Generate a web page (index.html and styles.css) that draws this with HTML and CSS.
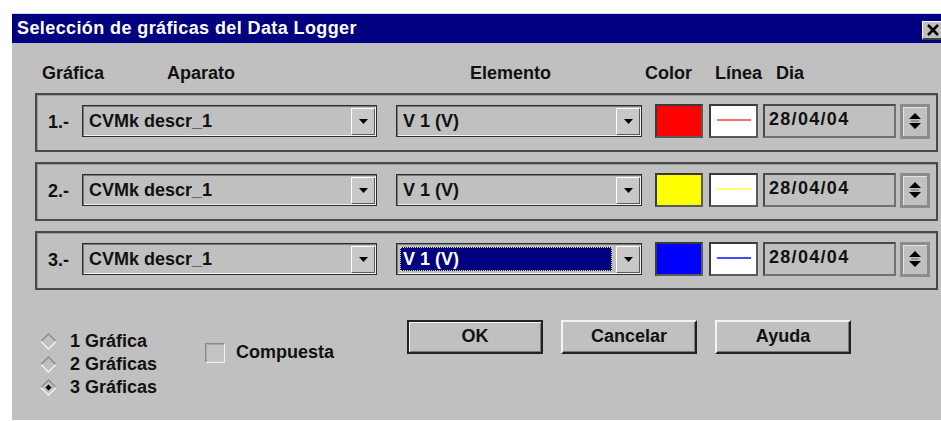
FILE: index.html
```html
<!DOCTYPE html>
<html lang="es">
<head>
<meta charset="utf-8">
<title>Selección de gráficas del Data Logger</title>
<link rel="stylesheet" href="styles.css">
</head>
<body>
<div class="dialog">
  <div class="titlebar">
    <span class="title">Selección de gráficas del Data Logger</span>
    <span class="close">
      <svg width="14" height="12" viewBox="0 0 14 12"><path d="M2 1 L12 11 M12 1 L2 11" stroke="#000" stroke-width="2.6" fill="none"/></svg>
    </span>
  </div>
  <div class="client">
    <div class="heads">
      <span class="h-graf">Gráfica</span>
      <span class="h-apar">Aparato</span>
      <span class="h-elem">Elemento</span>
      <span class="h-color">Color</span>
      <span class="h-linea">Línea</span>
      <span>Dia</span>
    </div>

    <div class="series">
      <div class="row">
        <span class="num">1.-</span>
        <div class="combo aparato">
          <span class="field">CVMk descr_1</span>
          <span class="drop"><svg width="9" height="5" viewBox="0 0 9 5"><path d="M0 0 H9 L4.5 5 Z" fill="#000"/></svg></span>
        </div>
        <div class="combo elemento">
          <span class="field">V 1 (V)</span>
          <span class="drop"><svg width="9" height="5" viewBox="0 0 9 5"><path d="M0 0 H9 L4.5 5 Z" fill="#000"/></svg></span>
        </div>
        <span class="swatch red"></span>
        <span class="linebox"><span class="stroke red"></span></span>
        <span class="date">28/04/04</span>
        <span class="spin"><svg width="16" height="22" viewBox="0 0 16 22"><path d="M2 9 L8 3 L14 9 Z M2 13 L8 19 L14 13 Z" fill="#000"/><path d="M4 11 H12" stroke="#6a6a6a" stroke-width="1"/></svg></span>
      </div>

      <div class="row">
        <span class="num">2.-</span>
        <div class="combo aparato">
          <span class="field">CVMk descr_1</span>
          <span class="drop"><svg width="9" height="5" viewBox="0 0 9 5"><path d="M0 0 H9 L4.5 5 Z" fill="#000"/></svg></span>
        </div>
        <div class="combo elemento">
          <span class="field">V 1 (V)</span>
          <span class="drop"><svg width="9" height="5" viewBox="0 0 9 5"><path d="M0 0 H9 L4.5 5 Z" fill="#000"/></svg></span>
        </div>
        <span class="swatch yellow"></span>
        <span class="linebox"><span class="stroke yellow"></span></span>
        <span class="date">28/04/04</span>
        <span class="spin"><svg width="16" height="22" viewBox="0 0 16 22"><path d="M2 9 L8 3 L14 9 Z M2 13 L8 19 L14 13 Z" fill="#000"/><path d="M4 11 H12" stroke="#6a6a6a" stroke-width="1"/></svg></span>
      </div>

      <div class="row">
        <span class="num">3.-</span>
        <div class="combo aparato">
          <span class="field">CVMk descr_1</span>
          <span class="drop"><svg width="9" height="5" viewBox="0 0 9 5"><path d="M0 0 H9 L4.5 5 Z" fill="#000"/></svg></span>
        </div>
        <div class="combo elemento">
          <span class="field selected">V 1 (V)</span>
          <span class="drop"><svg width="9" height="5" viewBox="0 0 9 5"><path d="M0 0 H9 L4.5 5 Z" fill="#000"/></svg></span>
        </div>
        <span class="swatch blue"></span>
        <span class="linebox"><span class="stroke blue"></span></span>
        <span class="date">28/04/04</span>
        <span class="spin"><svg width="16" height="22" viewBox="0 0 16 22"><path d="M2 9 L8 3 L14 9 Z M2 13 L8 19 L14 13 Z" fill="#000"/><path d="M4 11 H12" stroke="#6a6a6a" stroke-width="1"/></svg></span>
      </div>
    </div>

    <div class="footer">
      <div class="radios">
        <label class="radio">
          <svg width="17" height="17" viewBox="0 0 17 17"><path d="M1 8.5 L8.5 1 L16 8.5" stroke="#8c8c8c" stroke-width="1.4" fill="none"/><path d="M1 8.5 L8.5 16 L16 8.5" stroke="#f2f2f2" stroke-width="1.4" fill="none"/></svg>
          <span>1 Gráfica</span>
        </label>
        <label class="radio">
          <svg width="17" height="17" viewBox="0 0 17 17"><path d="M1 8.5 L8.5 1 L16 8.5" stroke="#8c8c8c" stroke-width="1.4" fill="none"/><path d="M1 8.5 L8.5 16 L16 8.5" stroke="#f2f2f2" stroke-width="1.4" fill="none"/></svg>
          <span>2 Gráficas</span>
        </label>
        <label class="radio">
          <svg width="17" height="17" viewBox="0 0 17 17"><path d="M1 8.5 L8.5 1 L16 8.5" stroke="#8c8c8c" stroke-width="1.4" fill="none"/><path d="M1 8.5 L8.5 16 L16 8.5" stroke="#f2f2f2" stroke-width="1.4" fill="none"/><path d="M8.5 5.5 L11.5 8.5 L8.5 11.5 L5.5 8.5 Z" fill="#000"/></svg>
          <span>3 Gráficas</span>
        </label>
      </div>
      <label class="check">
        <span class="box"></span>
        <span>Compuesta</span>
      </label>
      <div class="buttons">
        <span class="btn default">OK</span>
        <span class="btn">Cancelar</span>
        <span class="btn">Ayuda</span>
      </div>
    </div>
  </div>
</div>
</body>
</html>
```

FILE: styles.css
```css
html, body {
  margin: 0;
  padding: 0;
  background: #fff;
  overflow: hidden;
}

body {
  font-family: "Liberation Sans", Arial, sans-serif;
  font-weight: bold;
  font-size: 18px;
  color: #111;
}

.dialog {
  margin: 13px 0 0 12px;
  width: 929px;
  height: 407px;
  background: #c0c0c0;
  overflow: hidden;
}

/* caption bar */
.titlebar {
  height: 30px;
  background: #000080;
  display: flex;
  align-items: center;
  border-top: 1px solid #d8d8e8;
  box-sizing: border-box;
}

.title {
  color: #fff;
  padding-left: 5px;
  letter-spacing: 0.4px;
}

.close {
  margin-left: auto;
  margin-right: -6px;
  width: 25px;
  height: 19px;
  margin-top: 3px;
  background: #c0c0c0;
  border-top: 1px solid #fff;
  border-left: 1px solid #fff;
  border-bottom: 2px solid #404040;
  display: flex;
  align-items: center;
  padding-left: 3px;
  box-sizing: border-box;
}

/* dialog body */
.client {
  padding: 20px 3px 0 23px;
}

.heads {
  display: flex;
  padding-left: 7px;
  line-height: 20px;
  height: 20px;
}

.h-graf { width: 125px; }
.h-apar { width: 303px; }
.h-elem { width: 175px; }
.h-color { width: 70px; }
.h-linea { width: 61px; }

.series {
  margin-top: 10px;
  display: flex;
  flex-direction: column;
  gap: 10px;
}

.row {
  height: 59px;
  box-sizing: border-box;
  border: 2px solid #4a4a4a;
  box-shadow: inset 1px 1px 0 #9a9a9a;
  display: flex;
  align-items: center;
  padding: 0 0 3px 11px;
}

.num {
  width: 34px;
  padding-top: 3px;
}

.combo {
  height: 32px;
  box-sizing: border-box;
  border: 1px solid #2e2e2e;
  box-shadow: inset 1px 1px 0 #7a7a7a, inset -1px -1px 0 #f2f2f2;
  display: flex;
  align-items: stretch;
  padding: 2px 2px 2px 3px;
}

.combo.aparato { width: 295px; margin-right: 19px; }
.combo.elemento { width: 246px; margin-right: 13px; }

.field {
  flex: 1;
  display: flex;
  align-items: center;
  padding-left: 3px;
}

.field.selected {
  background: #000080;
  color: #fff;
  outline: 1px dotted #e8e070;
  outline-offset: -1px;
  margin: 1px 4px 1px 0;
}

.drop {
  width: 22px;
  background: #c8c8c8;
  border-top: 1px solid #fff;
  border-left: 1px solid #fff;
  box-shadow: 1px 1px 0 #5a5a5a;
  display: flex;
  align-items: center;
  justify-content: center;
}

.swatch, .linebox, .date {
  height: 34px;
  box-sizing: border-box;
  border: 2px solid;
  border-color: #3a3a3a #5a5a5a #5a5a5a #3a3a3a;
}

.swatch { width: 48px; margin-right: 6px; }
.swatch.red { background: #ff0000; }
.swatch.yellow { background: #ffff00; }
.swatch.blue { background: #0000ff; }

.linebox {
  width: 49px;
  margin-right: 5px;
  background: #fff;
  display: flex;
  align-items: center;
  justify-content: center;
  padding-bottom: 2px;
}

.stroke {
  width: 34px;
  height: 2px;
}
.stroke.red { background: #ff7070; }
.stroke.yellow { background: #ffff70; }
.stroke.blue { background: #4a4aff; }

.date {
  width: 133px;
  margin-right: 4px;
  padding: 3px 0 0 4px;
  letter-spacing: 1.3px;
  line-height: 20px;
  border-color: #4a4a4a #707070 #707070 #4a4a4a;
}

.spin {
  width: 30px;
  height: 35px;
  box-sizing: border-box;
  border: 3px solid #8c8c8c;
  background: #c0c0c0;
  box-shadow: inset 1px 1px 0 #e4e4e4;
  display: flex;
  align-items: center;
  justify-content: center;
}

/* bottom controls */
.footer {
  display: flex;
  align-items: flex-start;
  margin-top: 30px;
}

.radios {
  width: 165px;
  margin: 10px 0 0 5px;
  display: flex;
  flex-direction: column;
}

.radio {
  display: flex;
  align-items: center;
  gap: 13px;
  height: 23px;
}

.check {
  width: 202px;
  margin-top: 22px;
  display: flex;
  align-items: center;
  gap: 11px;
}

.box {
  width: 20px;
  height: 20px;
  box-sizing: border-box;
  border: 1px solid;
  border-color: #8a8a8a #f0f0f0 #f0f0f0 #8a8a8a;
  box-shadow: inset 1px 1px 0 #a8a8a8;
  background: #c4c4c4;
}

.buttons {
  display: flex;
  gap: 18px;
}

.btn {
  width: 136px;
  height: 34px;
  box-sizing: border-box;
  border: 2px solid;
  border-color: #f4f4f4 #222 #222 #f4f4f4;
  box-shadow: inset -1px -1px 0 #7a7a7a;
  display: flex;
  align-items: center;
  justify-content: center;
  padding-bottom: 2px;
}

.btn.default {
  border-color: #222;
  box-shadow: inset 1px 1px 0 #f4f4f4, inset -1px -1px 0 #7a7a7a;
}
```
